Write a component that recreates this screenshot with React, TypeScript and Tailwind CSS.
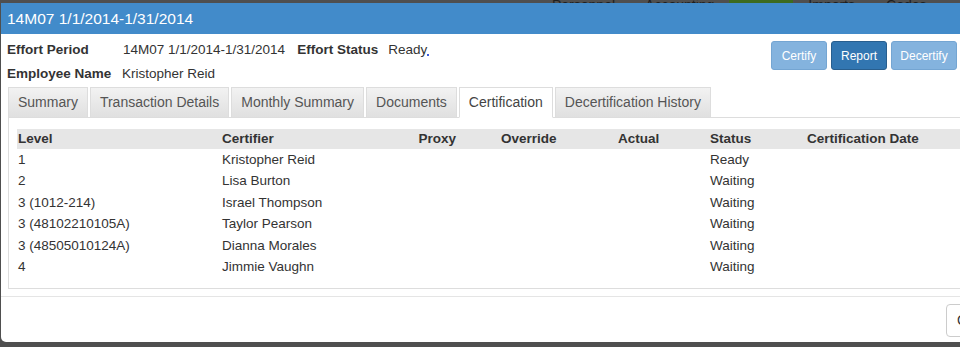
import React from 'react'

const tabs = ['Summary', 'Transaction Details', 'Monthly Summary', 'Documents', 'Certification', 'Decertification History']

const rows = [
  { level: '1', certifier: 'Kristopher Reid', status: 'Ready' },
  { level: '2', certifier: 'Lisa Burton', status: 'Waiting' },
  { level: '3 (1012-214)', certifier: 'Israel Thompson', status: 'Waiting' },
  { level: '3 (48102210105A)', certifier: 'Taylor Pearson', status: 'Waiting' },
  { level: '3 (48505010124A)', certifier: 'Dianna Morales', status: 'Waiting' },
  { level: '4', certifier: 'Jimmie Vaughn', status: 'Waiting' },
]

const cols = 'grid grid-cols-[205px_178px_56px_162px_92px_97px_1fr]'

export default function App() {
  return (
    <div
      className="w-[960px] h-[347px] overflow-hidden bg-[#4f4f4f] text-[13.5px] text-[#333]"
      style={{ fontFamily: '"Liberation Sans", Arial, sans-serif' }}
    >
      {/* page nav behind the overlay, only its bottom edge shows */}
      <div className="h-[3px] overflow-hidden relative">
        <div className="flex items-end h-[3px] text-[14px] leading-[14px] text-[#1e1e1e] pl-[552px]">
          <span className="translate-y-[9px]">Personnel</span>
          <span className="ml-[30px] translate-y-[9px]">Accounting</span>
          <span className="ml-[15px] w-[64px] h-[3px] bg-[#3d6b1f]" />
          <span className="ml-[15px] translate-y-[9px]">Imports</span>
          <span className="ml-[31px] translate-y-[9px]">Codes</span>
        </div>
      </div>

      <div className="ml-[1px] w-[1014px] h-[339px] bg-white rounded-b-[5px] flex flex-col overflow-hidden">
        <div className="h-[31px] bg-[#428bca] text-white text-[15.5px] pl-[6px] flex items-center">
          14M07 1/1/2014-1/31/2014
        </div>

        <div className="flex h-[54px]">
          <div className="w-[770px] pl-[6px] pt-[7px]">
            <div className="flex h-[16px] items-center mt-[1px]">
              <span className="w-[116px] font-bold">Effort Period</span>
              <span>14M07 1/1/2014-1/31/2014</span>
              <span className="ml-[12px] font-bold">Effort Status</span>
              <span className="ml-[10px]">Ready</span>
              <span className="w-[2px] h-[2px] bg-[#3b5bdb] self-end mb-[2px]" />
            </div>
            <div className="flex h-[16px] items-center mt-[8px]">
              <span className="w-[115px] font-bold">Employee Name</span>
              <span>Kristopher Reid</span>
            </div>
          </div>
          <div className="flex gap-[4px] pt-[7px] text-[12px] text-white">
            <button className="h-[29px] w-[56px] rounded-[3px] bg-[#84b3de] border border-[#74a5d2]">Certify</button>
            <button className="h-[29px] w-[56px] rounded-[3px] bg-[#3276b1] border border-[#285e8e]">Report</button>
            <button className="h-[29px] w-[66px] rounded-[3px] bg-[#84b3de] border border-[#74a5d2]">Decertify</button>
          </div>
        </div>

        <div className="ml-[7px] flex items-end gap-[2px] h-[30px] border-b border-[#dddddd] text-[14px]">
          {tabs.map((t) => {
            const active = t === 'Certification'
            return (
              <div
                key={t}
                className={
                  active
                    ? 'h-[31px] px-[9px] flex items-center bg-white border border-[#dddddd] border-b-white -mb-[1px] text-[#444]'
                    : 'h-[30px] px-[9px] flex items-center bg-gradient-to-b from-[#f2f2f2] to-[#e0e0e0] border border-b-0 border-[#dddddd] text-[#555]'
                }
              >
                {t}
              </div>
            )
          })}
        </div>

        <div className="ml-[7px] h-[171px] border border-t-0 border-[#dddddd] pt-[11px] pl-[8px]">
          <div className={`${cols} h-[20px] items-center bg-[#e6e6e6] font-bold`}>
            <div className="pl-[1px]">Level</div>
            <div>Certifier</div>
            <div className="text-right">Proxy</div>
            <div className="pl-[45px]">Override</div>
            <div>Actual</div>
            <div>Status</div>
            <div>Certification Date</div>
          </div>
          {rows.map((r) => (
            <div key={r.level + r.certifier} className={`${cols} h-[21.5px] items-center`}>
              <div className="pl-[1px]">{r.level}</div>
              <div>{r.certifier}</div>
              <div />
              <div />
              <div />
              <div>{r.status}</div>
              <div />
            </div>
          ))}
        </div>

        <div className="mt-[7px] border-t border-[#e5e5e5] flex pl-[945px] pt-[7px]">
          <button className="h-[33px] px-[10px] rounded-[4px] border border-[#cccccc] bg-white text-[14px] text-[#333]">
            Close
          </button>
        </div>
      </div>
    </div>
  )
}
